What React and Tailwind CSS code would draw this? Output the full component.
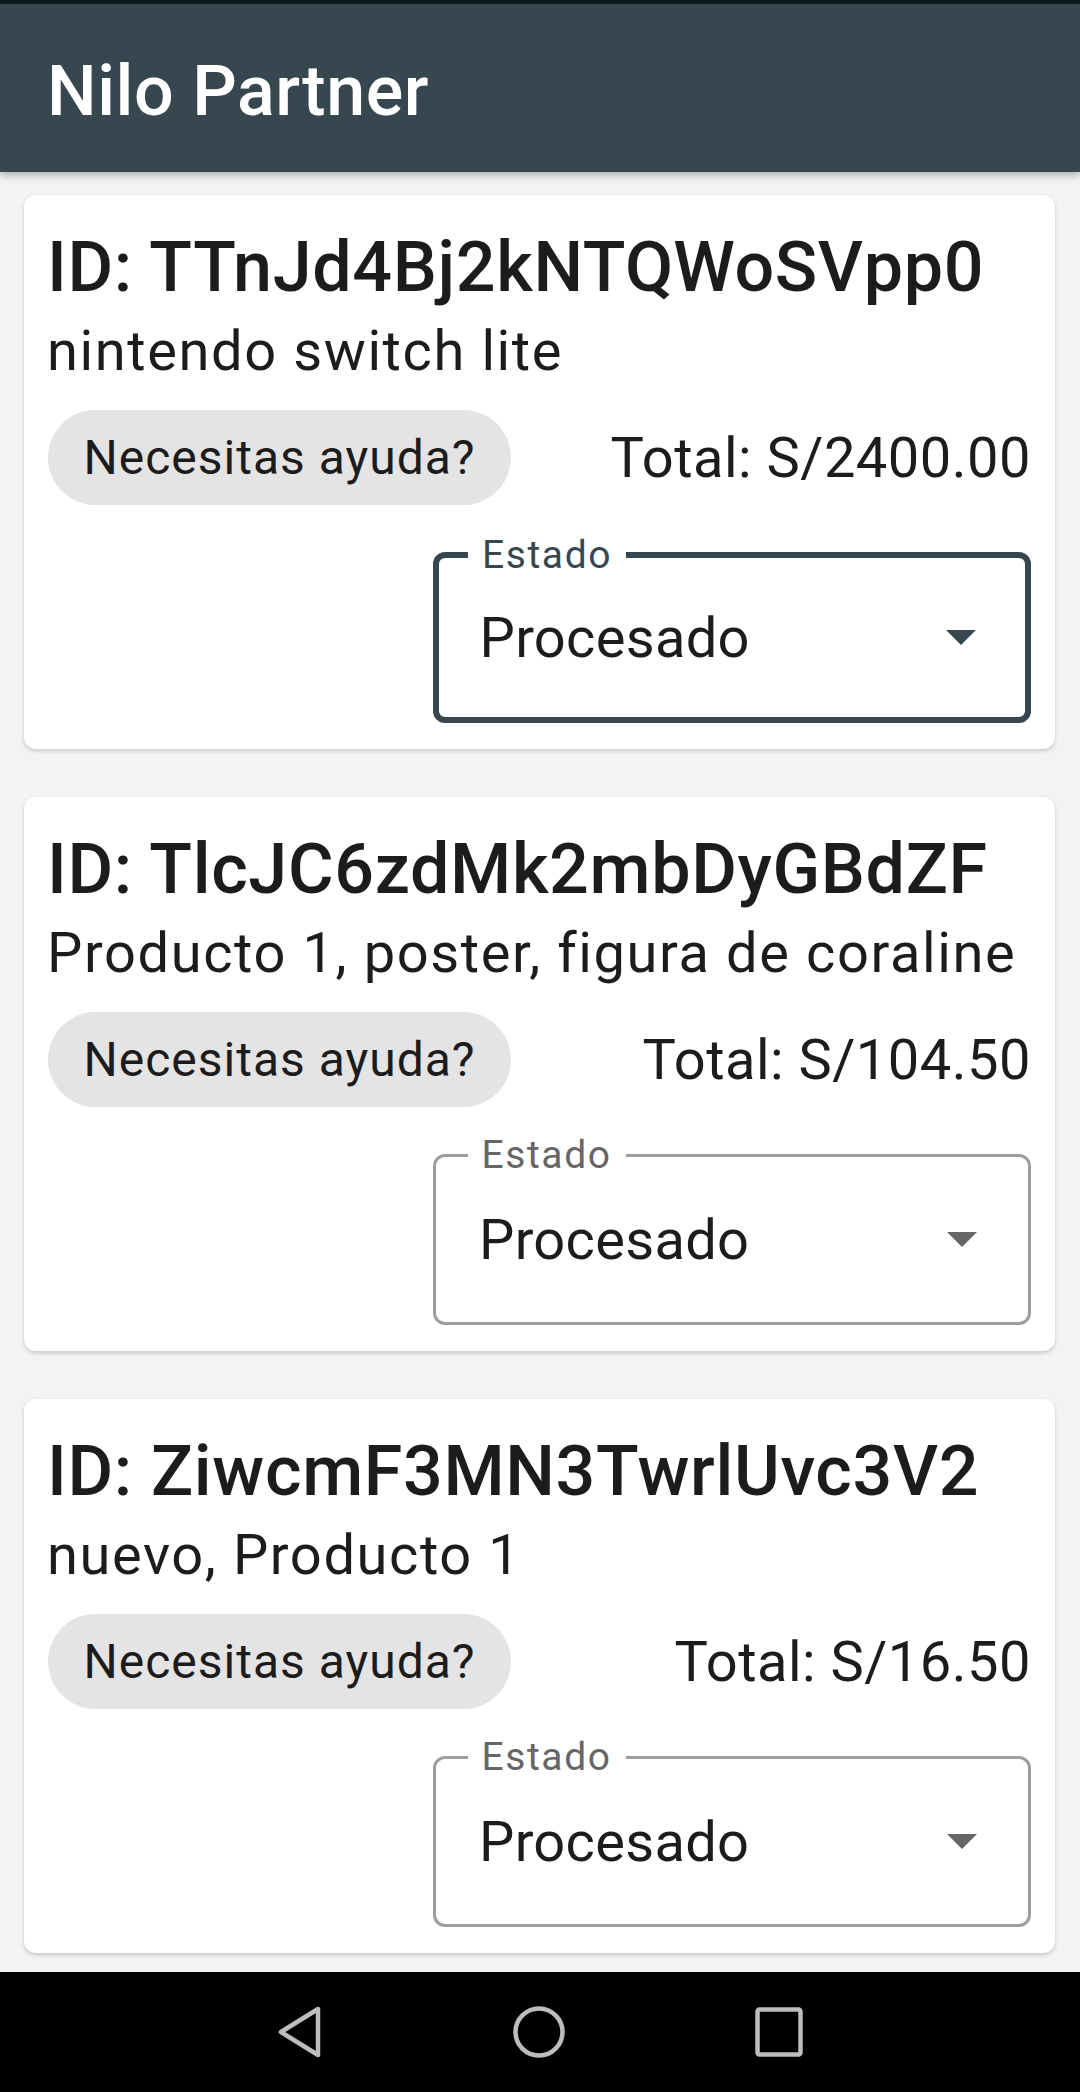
import React from "react";

const orders = [
  { id: "TTnJd4Bj2kNTQWoSVpp0", items: "nintendo switch lite", total: "S/2400.00", focused: true },
  { id: "TlcJC6zdMk2mbDyGBdZF", items: "Producto 1, poster, figura de coraline", total: "S/104.50", focused: false },
  { id: "ZiwcmF3MN3TwrlUvc3V2", items: "nuevo, Producto 1", total: "S/16.50", focused: false },
];

function Dropdown({ focused }) {
  return (
    <div
      className={
        focused
          ? "relative ml-auto mt-[47px] flex h-[171px] w-[598px] items-center rounded-[12px] border-[6px] border-[#37474f] pl-[40.5px] pr-[49px]"
          : "relative ml-auto mt-[47px] flex h-[171px] w-[598px] items-center rounded-[12px] border-[3.5px] border-[#9e9e9e] pl-[43px] pr-[51.5px]"
      }
    >
      <span
        className={
          focused
            ? "absolute left-[29px] top-[-26px] bg-white px-[14px] text-[39px] leading-[46px] tracking-[1.6px] text-[#37474f]"
            : "absolute left-[31.5px] top-[-25px] bg-white px-[14px] text-[39px] leading-[46px] tracking-[1.6px] text-[#666666]"
        }
      >
        Estado
      </span>
      <span className="flex-1 text-[56px] leading-[66px] tracking-[0.3px] text-[#1c1c1c]">Procesado</span>
      <svg width="30" height="15" viewBox="0 0 30 15">
        <path d="M0 0 L30 0 L15 15 Z" fill={focused ? "#37474f" : "#666666"} />
      </svg>
    </div>
  );
}

function OrderCard({ order }) {
  return (
    <div className="flex flex-col rounded-[12px] bg-white pb-[26px] pl-[23px] pr-[24px] pt-[31px] shadow-[0_2px_4px_rgba(0,0,0,0.18)]">
      <h2 className="text-[70px] font-medium leading-[82px] tracking-[0.65px] text-[#1c1c1c]">ID: {order.id}</h2>
      <p className="mt-[10px] whitespace-nowrap text-[56px] leading-[66px] tracking-[1.6px] text-[#1c1c1c]">{order.items}</p>
      <div className="mt-[26px] flex items-center justify-between">
        <button className="ml-[1px] flex h-[95px] w-[463px] items-center justify-center rounded-full bg-[#e4e4e4] text-[48px] leading-[56px] tracking-[1px] text-[#1c1c1c]">
          Necesitas ayuda?
        </button>
        <span className="text-[56px] leading-[66px] tracking-[0.5px] text-[#1c1c1c]">Total: {order.total}</span>
      </div>
      <Dropdown focused={order.focused} />
    </div>
  );
}

export default function App() {
  return (
    <div className="flex h-[2092px] w-[1080px] flex-col overflow-hidden bg-[#f3f3f3] font-['Roboto',sans-serif]">
      <div className="h-[4px] bg-[#0f1b21]" />
      <header className="relative z-10 flex h-[168px] items-center bg-[#37474f] pl-[47px] pt-[6px] shadow-[0_3px_8px_rgba(0,0,0,0.3)]">
        <h1 className="text-[70px] font-medium leading-[82px] tracking-[0.55px] text-white">Nilo Partner</h1>
      </header>
      <main className="flex flex-1 flex-col gap-[48px] overflow-hidden pl-[24px] pr-[25px] pt-[23px]">
        {orders.map((o) => (
          <OrderCard key={o.id} order={o} />
        ))}
      </main>
      <nav className="flex h-[120px] items-center justify-center bg-black">
        <div className="flex w-[526px] items-center justify-between">
          <svg width="46" height="52" viewBox="0 0 46 52">
            <path d="M41 3 L41 49 L4 26 Z" fill="none" stroke="#bdbdbd" strokeWidth="4.5" strokeLinejoin="round" />
          </svg>
          <svg width="54" height="54" viewBox="0 0 54 54">
            <circle cx="27" cy="27" r="23.5" fill="none" stroke="#bdbdbd" strokeWidth="4.5" />
          </svg>
          <svg width="48" height="50" viewBox="0 0 48 50">
            <rect x="2.5" y="2.5" width="43" height="45" rx="2" fill="none" stroke="#bdbdbd" strokeWidth="4.5" />
          </svg>
        </div>
      </nav>
    </div>
  );
}
